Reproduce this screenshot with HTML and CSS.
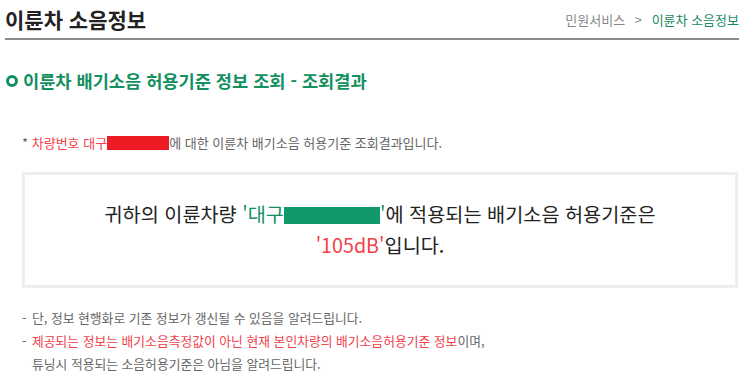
FILE: index.html
```html
<!DOCTYPE html>
<html lang="ko">
<head>
    <meta charset="UTF-8">
    <meta name="viewport" content="width=device-width, initial-scale=1.0">
    <title>이륜차 소음정보</title>
    <link rel="stylesheet" href="styles.css">
</head>
<body>
    <div class="page-header">
        <h1>이륜차 소음정보</h1>
        <div class="breadcrumb">
            <span>민원서비스</span>
            <span class="sep">&gt;</span>
            <span class="current">이륜차 소음정보</span>
        </div>
    </div>

    <h2 class="section-title"><span class="ring"></span>이륜차 배기소음 허용기준 정보 조회 - 조회결과</h2>

    <p class="result-note">* <span class="red">차량번호 대구<span class="mask-red"></span></span>에 대한 이륜차 배기소음 허용기준 조회결과입니다.</p>

    <div class="result-box">
        <p>귀하의 이륜차량 <span class="green">'대구<span class="mask-green"></span>'</span>에 적용되는 배기소음 허용기준은</p>
        <p><span class="red">'105dB'</span>입니다.</p>
    </div>

    <ul class="notice">
        <li>단, 정보 현행화로 기존 정보가 갱신될 수 있음을 알려드립니다.</li>
        <li><span class="red">제공되는 정보는 배기소음측정값이 아닌 현재 본인차량의 배기소음허용기준 정보</span>이며,<br>튜닝시 적용되는 소음허용기준은 아님을 알려드립니다.</li>
    </ul>
</body>
</html>
```

FILE: styles.css
```css
body {
    font-family: 'Noto Sans CJK KR', 'Noto Sans', sans-serif;
    background-color: #fff;
    margin: 0;
    padding: 0;
    color: #333;
}

.page-header {
    display: flex;
    justify-content: space-between;
    align-items: center;
    height: 38px;
    margin: 0 4px 0 5px;
    border-bottom: 2px solid #8a8a8a;
}

.page-header h1 {
    margin: 0;
    font-size: 21px;
    font-weight: bold;
    color: #222;
}

.breadcrumb {
    font-size: 13px;
    color: #888;
}

.breadcrumb .sep {
    margin: 0 6px;
}

.breadcrumb .current {
    color: #1a8a63;
}

.section-title {
    display: flex;
    align-items: center;
    margin: 28px 0 0 6px;
    font-size: 17.6px;
    font-weight: bold;
    color: #13905f;
}

.ring {
    width: 6px;
    height: 6px;
    border: 3px solid #13905f;
    border-radius: 50%;
    margin-right: 5px;
}

.result-note {
    margin: 40px 0 0 22px;
    font-size: 13px;
    color: #666;
}

.red {
    color: #f2414a;
}

.green {
    color: #13905f;
}

.mask-red {
    display: inline-block;
    width: 62px;
    height: 14px;
    vertical-align: -2px;
    background-color: #ed1c24;
}

.mask-green {
    display: inline-block;
    width: 96px;
    height: 17px;
    vertical-align: -2px;
    background-color: #12996b;
}

.result-box {
    margin: 20px 5px 0 22px;
    padding: 23px 0 25px;
    border: 3px solid #eee;
    text-align: center;
    font-size: 19.7px;
    color: #222;
}

.result-box p {
    margin: 0;
    line-height: 31px;
}

.notice {
    list-style: none;
    margin: 18px 0 0 22px;
    padding: 0;
    font-size: 12.8px;
    line-height: 23px;
    color: #666;
}

.notice li {
    padding-left: 10px;
    position: relative;
}

.notice li::before {
    content: '-';
    position: absolute;
    left: 0;
}
```
